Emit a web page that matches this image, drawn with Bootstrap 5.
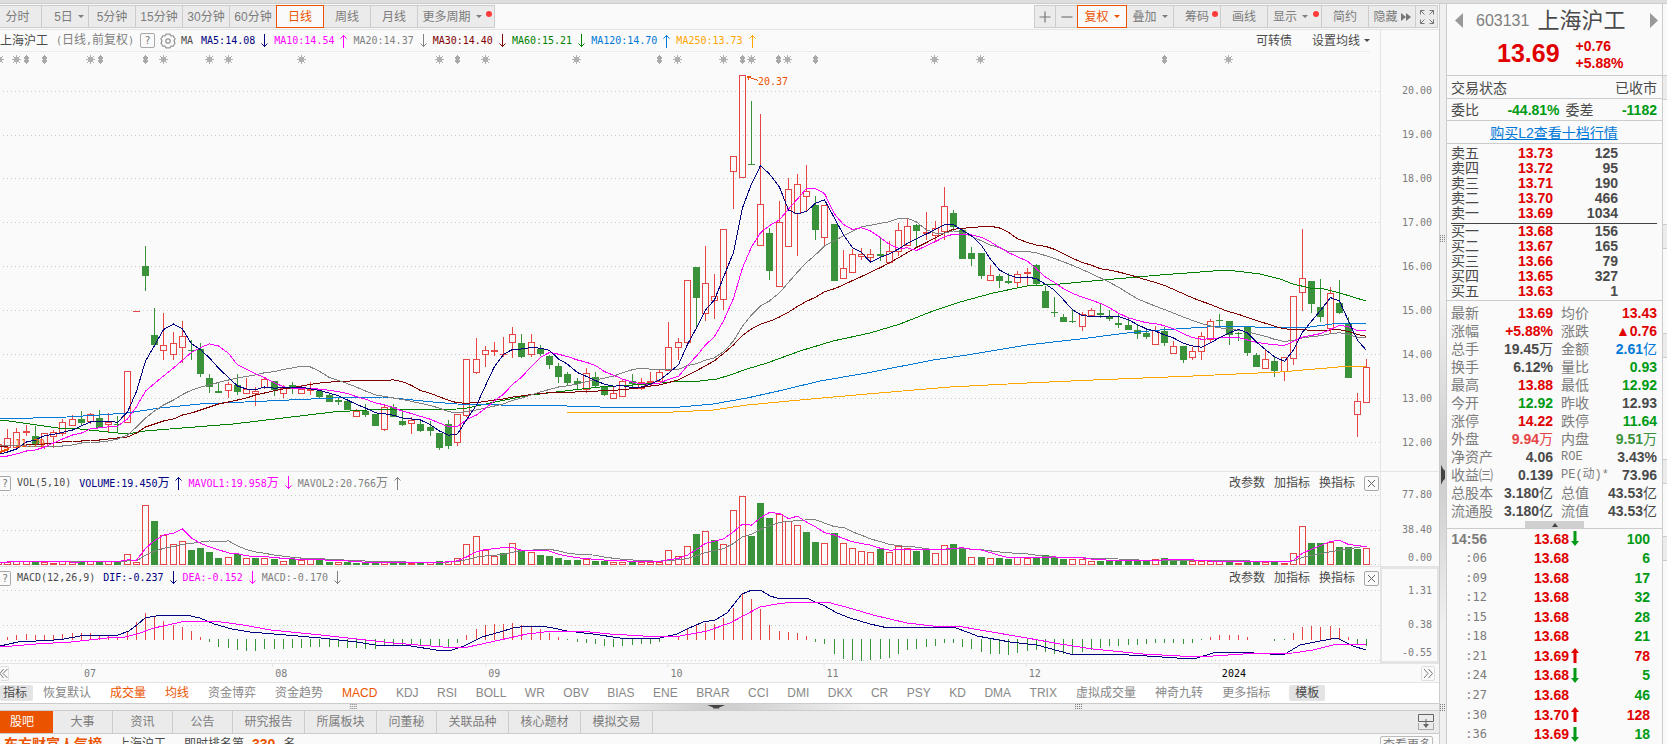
<!DOCTYPE html>
<html lang="zh-CN">
<head>
<meta charset="utf-8">
<meta name="viewport" content="width=device-width, initial-scale=1">
<title>上海沪工 603131</title>
<link href="https://cdn.jsdelivr.net/npm/bootstrap@5.3.0/dist/css/bootstrap.min.css" rel="stylesheet">
<style>
:root{--line:#ccc;--soft:#e4e4e4;--btn:#ebebeb;--ink:#4a4a4a;--dim:#7c7c7c;--accent:#ea5400;--up:#e00000;--down:#009a14;--blue:#0078d7}
body{font:12px/16px "Liberation Sans","Noto Sans CJK SC",sans-serif;background:#fafafa;color:var(--ink)}
button{font:inherit;color:inherit;background:none;border:0;padding:0;border-radius:0;white-space:nowrap}
svg{display:block}
.topstrip{height:4px;background:#dedede;border-bottom:1px solid var(--line)}
.mono{font-family:"DejaVu Sans Mono","Noto Sans CJK SC",monospace;font-size:10px;white-space:nowrap}
.mono .zh{font-size:12px}
.toolbar{height:26px;padding:1px 1px 0 0;border-bottom:1px solid var(--soft)}
.tool{height:23px;width:47px;border:1px solid var(--line);border-left:0;background:var(--btn);color:var(--dim);display:flex;align-items:center;justify-content:center;gap:5px;position:relative}
.tool.first{width:42px;padding-right:6px}
.tool.w22{width:22px}.tool.w49{width:49px}.tool.w54{width:54px}.tool.w77{width:77px}
.tool.on{border:1px solid var(--accent);color:var(--accent);background:#fafafa;margin-left:-1px;width:48px}
.tool.w49.on{width:50px}
.tool.padl{padding-left:8px}
.leftedge{border-left:1px solid var(--line)}
.caret{width:0;height:0;border:3px solid transparent;border-top-color:currentColor;border-bottom:0}
.reddot{position:absolute;width:6px;height:6px;border-radius:50%;background:#ff3b3b;right:2px;top:5px}
.tool.hasdot{padding-right:8px}
.pane{border-bottom:1px solid var(--soft)}
.panehead{height:22px;flex:none}
.mainhead{border-bottom:1px solid #ededed;margin-right:10px}
.period{width:76px}
.gap6{margin-left:6px}
.ind{display:flex;align-items:center;gap:6px;margin-right:5px}
.axis{width:59px;border-left:1px solid var(--soft);color:var(--dim);text-align:right;padding-right:7px;flex:none;display:flex;flex-direction:column;justify-content:space-between}
.axis.a1{padding-top:53px;padding-bottom:20px}
.axis.a2{padding-top:15px}
.axis.a3{border:2px solid var(--soft);padding:14px 5px 0 0}
.axis .mid{padding-top:6px}
.qbox{width:15px;height:15px;border:1px solid #a8a8a8;border-radius:2px;color:#777;line-height:13px;text-align:center}
.qcut{width:11px;border-left:0;border-radius:0 2px 2px 0}
.act{gap:9px;margin-right:1px}
.navy{color:#000080}.mag{color:#f0f}.gry{color:#808080}.mar{color:#800000}.grn{color:#008000}.blu{color:var(--blue)}.org{color:#ffa500}
.timebar{height:19px;border-bottom:1px solid var(--soft)}
.pager{width:14px;height:15px;border:1px solid #ddd;color:var(--dim);border-radius:2px;background:#fafafa}
.pager.cut{width:9px;border-left:0}
.indtabs{height:21px;background:#fff;border-bottom:1px solid var(--line);color:#888;gap:19px}
.indtabs .latin{width:715px}
.indtabs .chip{background:#e4e4e4;border-radius:2px;padding:0 6px;color:var(--ink)}
.indtabs .chip.one{padding:0 6px 0 3px;margin-right:-9px}
.indtabs .hot{color:var(--accent)}
.hsplit{height:7px;border-bottom:1px solid var(--line);background:linear-gradient(90deg,#f0f0f0 42%,#cfcfcf 49%,#cfcfcf 51%,#f0f0f0 60%)}
.btabs{height:23px;background:var(--btn);border-bottom:1px solid var(--line)}
.btab{border-right:1px solid var(--line);width:60px;color:var(--dim)}
.btab.w72{width:72px}
.btab.on{background:var(--accent);color:#fff;width:53px;padding-right:9px;border-right:0}
.feed{height:10px;overflow:hidden;padding-top:2px}
.feed b{color:var(--accent);font-size:14px}
.morebtn{border:1px solid #bbb;border-radius:2px;padding:0 2px;color:var(--dim);width:53px;margin-right:6px}
.vsplit{width:8px;border-left:1px solid var(--line);border-right:1px solid var(--line);background:linear-gradient(#f0f0f0 40%,#d0d0d0 60%,#d0d0d0 66%,#f0f0f0 84%)}
.quote{width:216px;flex:none;border-right:1px solid var(--line);font-size:14px}
.quote>*{flex-shrink:0}
.qhead{height:72px;border-bottom:1px solid var(--line)}
.qprice{padding-left:46px}
.qdiff{line-height:17px;padding-top:4px}
.qrow{border-bottom:1px solid var(--line);padding:0 5px 0 4px}
.qline{padding-top:1px;display:flex;align-items:center}
.h22{height:22px}.h23{height:23px}
.code{font-size:16px;color:#808080;margin-left:13px}.cname{font-size:22px;line-height:26px}
.bigp{font-size:25px;line-height:28px;font-weight:700}
.up{color:var(--up)}.down{color:var(--down)}.up2{color:#e64545}.down2{color:#3a923a}
.num{font-weight:700;text-align:right}
.num i{font-style:normal;font-weight:400}
.grid-t{width:100%;border-collapse:collapse;table-layout:fixed}
.grid-t td,.grid-t th{padding:0;font-weight:400;white-space:nowrap;overflow:visible}
.grid-t .num{font-weight:700}
.bookbox{padding-top:2px;padding-bottom:1px}
.midline{border-top:1px solid #444;margin-top:2px}
.book tr{height:15px;line-height:15px}
.statbox{padding-top:3px}
.stats tr{height:18px;line-height:18px}
.stats th{color:var(--dim)}
.stats .serif{font-family:"Liberation Mono","Noto Sans CJK SC",monospace;font-size:12px;vertical-align:middle}
.foldbar{width:59px;height:7px;background:#d0d0d0;margin:1px 0 0 74px}
.ticks{height:215px;line-height:16px}
.ticks th{color:var(--dim);text-align:right}
.ticks .mono{font-size:12px}
.sliver{width:4px}
.sliver div{background:var(--btn);border:1px solid var(--line);border-width:1px 0;height:25px}
</style>
</head>
<body>
<div class="vh-100 d-flex flex-column overflow-hidden">
<div class="topstrip flex-shrink-0"></div>
<div class="d-flex flex-grow-1" style="min-height:0">

<main class="d-flex flex-column flex-grow-1" style="min-width:0">
  <nav class="toolbar d-flex justify-content-between flex-shrink-0" aria-label="周期">
    <div class="d-flex">
      <button class="tool first">分时</button>
      <button class="tool padl">5日<span class="caret"></span></button>
      <button class="tool">5分钟</button><button class="tool">15分钟</button><button class="tool">30分钟</button><button class="tool">60分钟</button>
      <button class="tool on">日线</button><button class="tool">周线</button><button class="tool">月线</button>
      <button class="tool w77 hasdot">更多周期<span class="caret"></span><span class="reddot"></span></button>
    </div>
    <div class="d-flex">
      <button class="tool w22 leftedge" aria-label="放大"><svg width="12" height="12"><path d="M6 .5v11M.5 6h11" stroke="#777" stroke-width="1.2"/></svg></button>
      <button class="tool w22" aria-label="缩小"><svg width="12" height="12"><path d="M.5 6h11" stroke="#777" stroke-width="1.2"/></svg></button>
      <button class="tool w49 on">复权<span class="caret"></span></button>
      <button class="tool">叠加<span class="caret"></span></button>
      <button class="tool">筹码<span class="reddot"></span></button>
      <button class="tool">画线</button>
      <button class="tool w54 hasdot">显示<span class="caret"></span><span class="reddot"></span></button>
      <button class="tool">简约</button>
      <button class="tool" style="gap:3px">隐藏<svg width="10" height="8" fill="#777"><path d="M0 0l5 4-5 4zM5 0l5 4-5 4z"/></svg></button>
      <button class="tool w22" aria-label="全屏"><svg width="14" height="14" fill="none" stroke="#777"><path d="M.5 4.500V.5h4M.5.5l4 4M9.500.5h4v4M13.500.5l-4 4M.5 9.500v4h4M.5 13.500l4-4M9.500 13.500h4v-4M13.500 13.500l-4-4"/></svg></button>
    </div>
  </nav>

  <section class="pane d-flex flex-grow-1" style="min-height:0">
    <div class="d-flex flex-column flex-grow-1" style="min-width:0">
      <div class="panehead mainhead d-flex align-items-center">
        <span>上海沪工</span><span class="mono gry ms-2 me-2 period">(<span class="zh">日线</span>,<span class="zh">前复权</span>)</span>
        <button class="qbox mono" aria-label="帮助">?</button>
        <button class="ms-1 me-1" aria-label="设置"><svg width="18" height="16" viewBox="-9 -8 18 16" fill="none" stroke="#999" stroke-width="1.300"><path d="M-2-6.800h4l1 1.600h2.200L7-2l-1 2 1 2-1.800 3.200H3L2 6.800h-4L-3 5.200h-2.200L-7 2l1-2-1-2 1.800-3.200H-3z"/><circle r="2.200"/></svg></button>
        <span class="mono me-2">MA</span>
        <div class="mono d-flex" data-ind='[["MA5:14.08","navy",0],["MA10:14.54","mag",1],["MA20:14.37","gry",0],["MA30:14.40","mar",0],["MA60:15.21","grn",0],["MA120:14.70","blu",1],["MA250:13.73","org",1]]'></div>
        <button class="ms-auto">可转债</button>
        <button class="d-flex align-items-center gap-1 ms-3 ps-1">设置均线<span class="caret"></span></button>
      </div>
      <svg id="kline" class="flex-grow-1 w-100" style="min-height:0" viewBox="0 52 1380 419" preserveAspectRatio="none"></svg>
    </div>
    <div class="axis a1 mono"><span>20.00</span><span>19.00</span><span>18.00</span><span>17.00</span><span>16.00</span><span>15.00</span><span>14.00</span><span>13.00</span><span>12.00</span></div>
  </section>

  <section class="pane d-flex flex-shrink-0">
    <div class="flex-grow-1" style="min-width:0">
      <div class="panehead d-flex align-items-center">
        <button class="qbox qcut mono" aria-label="帮助">?</button>
        <span class="mono gap6 me-2">VOL(5,10)</span>
        <div class="mono d-flex" data-ind='[["VOLUME:19.450万","navy",1],["MAVOL1:19.958万","mag",0],["MAVOL2:20.766万","gry",1]]'></div>
        <div class="act ms-auto d-flex align-items-center"></div>
      </div>
      <svg id="vol" class="w-100" height="72" viewBox="0 494 1380 72" preserveAspectRatio="none"></svg>
    </div>
    <div class="axis a2 mono"><span>77.80</span><span class="mid">38.40</span><span>0.00</span></div>
  </section>

  <section class="pane d-flex flex-shrink-0">
    <div class="flex-grow-1" style="min-width:0">
      <div class="panehead d-flex align-items-center">
        <button class="qbox qcut mono" aria-label="帮助">?</button>
        <span class="mono gap6 me-2">MACD(12,26,9)</span>
        <div class="mono d-flex" data-ind='[["DIF:-0.237","navy",0],["DEA:-0.152","mag",0],["MACD:-0.170","gry",0]]'></div>
        <div class="act ms-auto d-flex align-items-center"></div>
      </div>
      <svg id="macd" class="w-100" height="74" viewBox="0 589 1380 74" preserveAspectRatio="none"></svg>
    </div>
    <div class="axis a3 mono"><span>1.31</span><span class="mid">0.38</span><span>-0.55</span></div>
  </section>

  <div class="timebar d-flex align-items-center flex-shrink-0">
    <button class="pager cut" aria-label="向前"><svg width="8" height="13" fill="none" stroke="#777"><path d="M3.500 2L0 6.500 3.500 11M7.500 2L3 6.500 7.500 11"/></svg></button>
    <svg id="months" class="flex-grow-1 mono" height="18" style="min-width:0"></svg>
    <button class="pager me-1" aria-label="向后"><svg width="12" height="13" fill="none" stroke="#777"><path d="M2 2l4 4.500L2 11M6.500 2l4 4.500-4 4.500"/></svg></button>
  </div>

  <nav class="indtabs d-flex align-items-center flex-shrink-0 overflow-hidden" aria-label="指标">
    <button class="chip one">指标</button><button>恢复默认</button><button class="hot">成交量</button><button class="hot">均线</button><button>资金博弈</button><button>资金趋势</button>
    <div class="latin d-flex justify-content-between flex-shrink-0"><button class="hot">MACD</button><button>KDJ</button><button>RSI</button><button>BOLL</button><button>WR</button><button>OBV</button><button>BIAS</button><button>ENE</button><button>BRAR</button><button>CCI</button><button>DMI</button><button>DKX</button><button>CR</button><button>PSY</button><button>KD</button><button>DMA</button><button>TRIX</button></div>
    <button>虚拟成交量</button><button>神奇九转</button><button>更多指标</button><button class="chip">模板</button>
  </nav>
  <div class="hsplit d-flex align-items-center flex-shrink-0">
    <svg class="w-100" height="6"><g fill="#777" id="hd"></g><svg x="49.770%" width="20" height="6" overflow="visible"><path d="M-9 1h18L3 3.500v1h-6v-1z" fill="#444"/></svg></svg>
  </div>
  <nav class="btabs d-flex flex-shrink-0" aria-label="资讯">
    <button class="btab on">股吧</button><button class="btab">大事</button><button class="btab">资讯</button><button class="btab">公告</button><button class="btab w72">研究报告</button><button class="btab w72">所属板块</button><button class="btab">问董秘</button><button class="btab w72">关联品种</button><button class="btab w72">核心题材</button><button class="btab w72">模拟交易</button>
    <button class="ms-auto me-1" aria-label="收起"><svg width="17" height="16" fill="none" stroke="#666"><path d="M.5 7.500v-7h15v7zM8 5v8"/><path d="M.5 9.500v6h15v-6" stroke-dasharray="1 1"/><path d="M5 10h6l-3 4z" fill="#666" stroke="none"/></svg></button>
  </nav>
  <div class="feed d-flex flex-shrink-0 align-items-start">
    <b class="ps-1">东方财富人气榜</b><span class="ms-3">上海沪工，</span><span class="gap6">即时排名第</span><b class="mx-2">330</b><span>名</span>
    <button class="morebtn ms-auto">查看更多</button>
  </div>
</main>

<div class="vsplit flex-shrink-0">
  <svg width="6" height="100%"><g fill="#777" id="vd"></g><svg y="63.600%" overflow="visible" width="6" height="20"><path d="M1-10v20l2-4 2-2v-8l-2-2z" fill="#444"/></svg></svg>
</div>

<aside class="quote d-flex flex-column">
  <div class="qhead px-1">
    <div class="d-flex align-items-center pt-1">
      <button class="ms-1" aria-label="上一只"><svg width="8" height="16" fill="#999"><path d="M8 0v15L0 7.500z"/></svg></button>
      <span class="code">603131</span><span class="cname ms-2">上海沪工</span>
      <button class="ms-auto" aria-label="下一只"><svg width="8" height="16" fill="#999"><path d="M0 0v15l8-7.500z"/></svg></button>
    </div>
    <div class="qprice d-flex align-items-center up">
      <span class="bigp">13.69</span><span class="qdiff fw-bold ms-3">+0.76<br>+5.88%</span>
    </div>
  </div>
  <div class="qrow qline h23 justify-content-between"><span>交易状态</span><span>已收市</span></div>
  <div class="qrow qline h22"><span>委比</span><b class="down ms-auto">-44.81%</b><span class="gap6">委差</span><b class="down ms-auto">-1182</b></div>
  <div class="qrow qline h23 justify-content-center"><a href="#" class="blu">购买L2查看十档行情</a></div>
  <div class="qrow bookbox">
    <table class="grid-t book" id="sell"></table>
    <div class="midline"></div>
    <table class="grid-t book" id="buy"></table>
  </div>
  <div class="qrow statbox">
    <table class="grid-t stats"><colgroup><col style="width:42px"><col style="width:60px"><col style="width:48px"><col></colgroup><tbody id="stats"></tbody></table>
    <button class="foldbar d-block" aria-label="收起"><svg class="mx-auto" width="8" height="5"><path d="M1 5h6L4 1z" fill="#444"/></svg></button>
  </div>
  <table class="grid-t ticks"><colgroup><col style="width:40px"><col style="width:82px"><col style="width:14px"><col><col style="width:12px"></colgroup><tbody id="ticks"></tbody></table>
</aside>
<div class="sliver flex-shrink-0" aria-hidden="true"><div style="margin-top:71px"></div><div style="margin-top:124px"></div><div style="margin-top:84px"></div><div style="margin-top:101px"></div><div style="margin-top:52px"></div></div>
</div>
</div>
<script src="https://cdn.jsdelivr.net/npm/bootstrap@5.3.0/dist/js/bootstrap.bundle.min.js"></script>
<script>
const $=id=>document.getElementById(id);
// indicator readouts with a trend arrow
document.querySelectorAll('[data-ind]').forEach(el=>{
  el.innerHTML=JSON.parse(el.dataset.ind).map(([t,c,up])=>`<span class="ind ${c}"><span>${t.replace('万','<span class="zh">万</span>')}</span><svg width="8" height="14" fill="none" stroke="currentColor">${up?'<path d="M3.500 14V1M.5 4.500l3-3 3 3"/>':'<path d="M3.500 0v13M.5 9.500l3 3 3-3"/>'}</svg></span>`).join('');
});
document.querySelectorAll('.act').forEach(el=>{
  el.innerHTML='<button>改参数</button><button>加指标</button><button>换指标</button><button class="qbox" aria-label="关闭"><svg width="13" height="13" stroke="#666"><path d="M3 3l7 7M10 3l-7 7"/></svg></button>';
});
// candles: colour, high, body top, body bottom, low
const K=`r429,438,447,447 r428,432,447,447 r425,431,432,436 g426,436,444,447 r433,433,446,449 r430,432,436,448 r419,422,433,436 r415,419,425,425 g411,419,423,426 r413,414,421,424 g410,418,428,428 r413,422,424,433 g416,424,425,433 r371,371,422,422 r311,311,311,311 g246,266,276,291 g308,335,345,345 r313,345,350,360 r332,343,354,360 r321,336,347,363 g340,350,350,360 g343,349,374,377 g374,378,387,393 g382,391,393,393 r382,384,390,398 g374,385,392,395 r378,389,393,393 r387,391,393,406 r377,379,387,389 g381,381,390,396 r385,388,393,398 g382,385,389,394 r385,389,393,393 r382,389,390,395 g391,391,397,398 g394,395,402,402 g398,400,402,405 g401,401,410,410 r409,411,416,417 g404,411,415,417 g414,414,426,426 r405,407,429,431 g404,407,417,417 g410,421,425,426 r417,420,423,434 g420,424,431,432 g421,427,431,436 g433,433,448,450 g420,424,446,449 r414,414,442,446 r359,359,415,417 r338,359,372,374 r346,350,354,367 r342,350,351,356 r337,354,354,357 r327,334,342,358 g334,343,357,358 r334,342,354,357 g345,349,354,356 g355,356,365,369 g363,366,377,383 g372,374,383,386 g378,381,384,389 r368,373,389,393 g372,377,386,387 g387,387,395,396 r387,393,398,398 r379,381,396,396 g374,381,384,389 r378,382,388,390 r372,381,382,387 r369,372,381,381 r322,347,370,370 r338,342,347,360 r280,280,342,342 g267,267,298,329 r246,283,313,321 r274,296,300,319 r229,229,299,310 r156,156,171,209 r75,75,177,177 g101,164,164,164 r114,204,245,245 g228,233,271,280 r201,222,286,287 r178,189,246,246 r174,184,213,256 r165,191,196,211 g196,205,230,240 r205,205,237,246 g224,224,281,281 r250,268,278,278 r249,254,272,272 r248,254,256,260 r249,254,257,261 g238,254,256,261 r241,251,262,264 r223,230,251,256 r219,226,245,245 g224,225,231,247 r212,232,233,240 r221,228,235,241 r187,206,231,240 g210,213,227,230 g229,230,259,259 g247,253,259,266 g253,253,276,279 r265,275,280,280 g274,276,281,288 g273,281,283,284 r271,274,282,287 r268,272,273,285 g264,265,284,285 g286,291,308,308 g297,312,313,317 g314,317,322,322 g309,321,322,323 r312,314,326,331 r308,310,315,317 g303,313,315,318 g310,317,319,321 g313,323,325,328 g318,325,330,330 g325,330,334,339 g329,333,337,339 r326,330,344,344 g327,331,343,346 r341,346,353,353 g346,346,360,363 r347,351,357,360 r332,336,351,360 r319,321,339,342 g314,320,321,327 g321,321,335,345 g332,333,334,341 g326,327,353,356 g353,355,367,367 r350,359,368,368 g356,361,371,377 r357,357,371,381 r296,296,358,365 r229,278,292,311 g281,281,304,313 g279,307,317,322 r287,293,328,333 g280,303,313,314 g317,323,378,378 r393,401,414,437 r359,367,402,402`.split(/\s+/).map(s=>[s[0],...s.slice(1).split(',').map(Number)]);
const X=i=>Math.floor(7.8+i*9.182)+.5;
const RED='#e64545',GREEN='#3a923a';
const close=K.map(k=>k[0]=='r'?k[2]:k[3]);
const bar=(x,t,b,red)=>red&&b-t>0?`<rect x="${x-3}" y="${t+.5}" width="6" height="${b-t}" fill="none" stroke="${RED}"/>`:`<rect x="${x-3.5}" y="${t}" width="7" height="${Math.max(1,b-t)}" fill="${red?RED:GREEN}"/>`;
const vl=(x,a,b,c)=>b>a?`<path d="M${x} ${a}V${b}" stroke="${c}"/>`:'';
const pl=(pts,c)=>`<polyline points="${pts.map(p=>p.join()).join(' ')}" fill="none" stroke="${c}"/>`;
const grid=ys=>ys.map(y=>`<path d="M3 ${y}.5H1376" stroke="#c8c8c8" stroke-dasharray="1 3"/><path d="M1378 ${y}.5h2" stroke="#e4e4e4"/>`).join('');
function avg(v,n,head){return v.map((_,i)=>[X(i),i<head.length?head[i]:v.slice(Math.max(0,i-n+1),i+1).reduce((a,b)=>a+b)/Math.min(n,i+1)]);}
const P=s=>s.trim().split(/\s+/).map(p=>p.split(',').map(Number));
let h=grid([91,135,178,222,266,310,354,398,442]);
h+=bar(-1.5,444,451,true);
K.forEach(([c,hi,t,b,lo],i)=>{const col=c=='r'?RED:GREEN,x=X(i);h+=vl(x,hi,t,col)+vl(x,b,lo,col)+bar(x,t,b,c=='r');});
h+=pl(P('0,420 9,421 37,425 58,428 80,429 108,432 127,434 145,431 182,428 233,424 283,418 333,412 367,410 457,409 467,408 500,401 530,395 540,394 573,390 600,387 633,385 660,383 683,381 700,381 717,379 730,375 747,369 767,363 800,351 833,341 870,333 900,324 933,311 960,302 993,293 1027,286 1060,284 1103,280 1160,275 1227,270 1260,274 1280,279 1293,284 1310,288 1320,288 1340,293 1366,301'),'#008000');
h+=pl(P('0,419 67,417 100,415 127,413 160,408 200,404 267,401 333,398 383,397 433,402 457,404 500,405 567,406 600,407 680,407 713,404 747,398 783,390 820,381 867,373 933,360 967,355 1027,345 1080,339 1127,333 1160,330 1207,327 1233,326 1277,328 1310,327 1340,323 1366,323'),'#0078d7');
h+=pl(P('567,412 673,412 713,410 747,405 800,400 867,394 950,387 1027,383 1093,380 1193,376 1280,372 1327,368 1350,366 1366,366'),'#ffa500');
h+=pl([[0,446],...avg(close,30,[446,445,445,444,444,443,442,441,441,440,440,439,438,437,433,427,424,421,419,415,413,410,407,404,402,400,398,395,393])],'#800000');
h+=pl([[0,445],...avg(close,20,[445,445,446,446,446,446,446,445,443,442,442,441,439,435,427,418,411,405,400])],'#808080');
h+=pl([[0,456],...avg(close,10,[456,454,451,450,447,443,439,435,433])],'#f0f');
h+=pl([[0,454],...avg(close,5,[452,449,442,440])],'#000080');
// event marks along the top edge
[-1,16,90,163,209,228,301,439,485,576,677,723,751,787,934,980,1228].forEach(x=>h+=`<path transform="translate(${x} 59)" fill="#b0b0b0" d="M-2-2h5v5h-5zM-4 0h9v1h-9zM0-4h1v9h-1zM-3-3h1v1h-1zM3-3h1v1h-1zM-3 3h1v1h-1zM3 3h1v1h-1z"/>`);
[26,44,100,145,457,659,742,778,815,1164].forEach(x=>h+=`<path transform="translate(${x} 59)" fill="#a8a8a8" d="M0-4h1v9h-1zM-1-3h3v7h-3zM-2-2h5v2h-5zM-2 1h5v2h-5z"/>`);
h+='<path d="M747 76.500h4M747 76.500l2 3M747 76.500l11 4" stroke="#ea5400" fill="none"/><text class="mono" x="758" y="85" fill="#ea5400">20.37</text><path d="M0 452l9-3" stroke="#ea5400" stroke-width="2"/><text class="mono" x="15" y="447" fill="#ea5400">11.79</text>';
const put=(id,s)=>$(id).innerHTML=`<g shape-rendering="crispEdges">${s}</g>`;
put('kline',h);
// tops of the volume bars, in thirds of a pixel
const V='276 272 272 277 277 278 272 277 276 272 277 272 277 251 275 104 153 194 221 212 240 234 246 264 260 252 263 264 263 267 272 267 271 267 271 276 275 275 278 279 278 272 276 278 278 278 277 273 272 263 221 197 240 258 249 218 240 245 255 258 264 270 270 266 272 273 275 275 276 276 276 276 241 257 227 192 182 210 223 119 77 198 99 144 133 154 164 186 216 220 189 218 233 242 245 237 245 228 233 243 239 248 224 222 234 260 261 263 264 267 260 265 262 255 262 267 266 268 274 272 272 272 272 273 273 266 264 273 272 274 273 273 273 273 278 274 275 277 275 278 250 167 219 219 217 231 231 237 233'.split(' ').map(v=>470+v/3);
h=grid([495,530,564])+bar(-1.5,562,564,true);
V.forEach((v,i)=>{const red=i==0||close[i]<=close[i-1];const t=Math.round(v);h+=bar(X(i),t,red?564:565,red);});
h+=pl([[0,562],...avg(V,10,[])],'#808080')+pl([[0,562],...avg(V,5,[])],'#f0f');
put('vol',h);
const M='501 495 492 495 495 495 492 489 489 489 497 497 503 484 456 429 438 453 465 471 484 501 516 531 534 540 543 543 537 537 537 534 533 531 531 531 531 534 534 536 537 528 528 525 525 525 528 530 531 519 495 477 465 462 462 459 465 468 477 489 501 510 516 519 522 528 531 528 525 522 522 516 506 498 475 465 459 462 444 414 370 388 417 465 483 486 489 498 516 522 552 567 570 573 570 567 564 552 540 537 531 528 519 519 531 537 546 552 552 555 549 543 540 546 551 552 552 546 540 534 528 528 525 525 522 519 519 519 522 519 510 501 495 495 495 501 508 508 513 510 489 471 468 471 468 474 501 522 528'.split(' ').map(v=>Math.round(470+v/3));
h=grid([590,625,660]);
M.forEach((y,i)=>{h+=y<639?vl(X(i),y,640,RED):vl(X(i),639,y,GREEN);});
h+=pl(P('0,646 18,642 36,641 54,640 64,639 86,635 118,635 129,631 137,625 145,618 161,615 186,615 200,618 214,624 232,629 250,632 286,635 321,638 357,642 375,645 411,646 436,650 452,650 464,646 482,637 500,632 513,628 527,626 540,626 553,628 567,631 593,634 620,638 660,638 677,634 687,629 703,622 715,620 727,613 742,594 752,590 762,591 770,596 777,598 807,598 815,602 823,605 837,613 850,618 870,624 888,628 900,627 930,628 953,627 970,633 977,636 1010,642 1037,645 1070,654 1110,654 1147,656 1177,658 1197,658 1213,653 1237,652 1270,654 1285,654 1300,645 1320,641 1337,638 1343,641 1353,646 1366,650'),'#000080');
h+=pl(P('0,647 36,644 71,642 107,638 125,637 137,634 154,628 186,621 214,621 243,625 271,630 321,635 357,639 393,643 443,647 468,647 500,640 527,634 553,631 580,631 610,634 660,637 680,636 707,631 730,623 760,607 777,604 793,602 827,602 853,609 873,615 907,623 933,626 957,626 980,630 1027,638 1060,644 1093,649 1143,654 1180,656 1213,656 1243,654 1293,653 1313,650 1337,644 1357,644 1366,645'),'#f0f');
put('macd',h);
$('months').innerHTML=[['07',81],['08',272],['09',485],['10',667],['11',823],['12',1025],['2024',1218]].map(([t,x])=>`<svg x="${(x-9)/1411*100}%" overflow="visible"><path d="M.5 0v3" stroke="#e4e4e4"/><text x="3" y="13" fill="${t=='2024'?'#000':'#7c7c7c'}">${t}</text></svg>`).join('');
let d='';for(const cx of ['24.300%','74.700%']){d+=`<svg x="${cx}">`;for(let r=0;r<3;r++)for(let c=0;c<4;c++)d+=`<rect x="${c*2}" y="${r*2}" width="1" height="1"/>`;d+='</svg>';}
$('hd').innerHTML=d;
d='';for(const cy of ['31.200%','94.600%']){d+=`<svg y="${cy}">`;for(let r=0;r<4;r++)for(let c=0;c<3;c++)d+=`<rect x="${c*2}" y="${r*2}" width="1" height="1"/>`;d+='</svg>';}
$('vd').innerHTML=d;
const book=(id,rows)=>$(id).innerHTML='<colgroup><col style="width:42px"><col style="width:60px"><col style="width:65px"><col></colgroup>'+rows.map(r=>`<tr><th>${r[0]}</th><td class="num up">${r[1]}</td><td class="num">${r[2]}</td><td></td></tr>`).join('');
book('sell',[['卖五','13.73',125],['卖四','13.72',95],['卖三','13.71',190],['卖二','13.70',466],['卖一','13.69',1034]]);
book('buy',[['买一','13.68',156],['买二','13.67',165],['买三','13.66',79],['买四','13.65',327],['买五','13.63',1]]);
$('stats').innerHTML=[['最新','13.69','up','均价','13.43','up'],['涨幅','+5.88%','up','涨跌','▲0.76','up'],['总手','19.45万','','金额','2.61亿','blu'],['换手','6.12%','','量比','0.93','down'],['最高','13.88','up','最低','12.92','down'],['今开','12.92','down','昨收','12.93',''],['涨停','14.22','up','跌停','11.64','down'],['外盘','9.94万','up2','内盘','9.51万','down2'],['净资产','4.06','','ROE','3.43%',''],['收益㈢','0.139','','PE(动)*','73.96',''],['总股本','3.180亿','','总值','43.53亿',''],['流通股','3.180亿','','流值','43.53亿','']].map(r=>{const n=(v,c)=>`<td class="num ${c}">${v.replace(/[万亿]/,'<i>$&</i>')}</td>`;return `<tr><th>${r[0]}</th>${n(r[1],r[2])}<th class="ps-2${/[A-Z]/.test(r[3])?' serif':''}">${r[3]}</th>${n(r[4],r[5])}</tr>`}).join('');
$('ticks').innerHTML=[['14:56','13.68','d',100],[':06','13.68','',6],[':09','13.68','',17],[':12','13.68','',32],[':15','13.68','',28],[':18','13.68','',21],[':21','13.69','u',78],[':24','13.68','d',5],[':27','13.68','',46],[':30','13.70','u',128],[':36','13.69','d',18]].map((r,i)=>`<tr><th class="${i?'mono':'num'}">${r[0]}</th><td class="num up">${r[1]}</td><td>${r[2]?`<svg width="8" height="15" style="margin-left:2px" fill="${r[2]=='u'?'#e00000':'#009a14'}"><path d="${r[2]=='u'?'M4 0l4 5H5.500v10h-3V5H0z':'M4 15l4-5H5.500V0h-3v10H0z'}"/></svg>`:''}</td><td class="num ${r[2]=='u'?'up':'down'}">${r[3]}</td><td></td></tr>`).join('');
</script>
</body>
</html>
